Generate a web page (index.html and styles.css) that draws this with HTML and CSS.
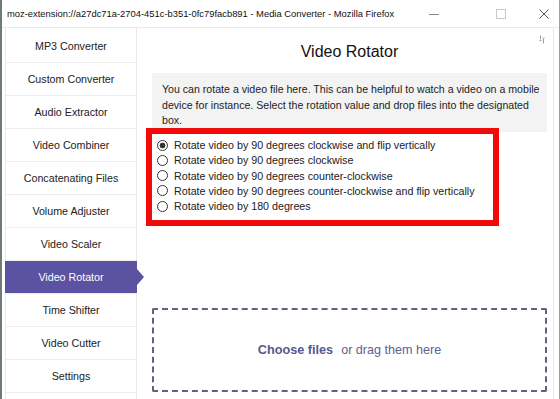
FILE: index.html
```html
<!DOCTYPE html>
<html lang="en">
<head>
  <meta charset="UTF-8">
  <title>Media Converter</title>
  <link rel="stylesheet" href="styles.css">
</head>
<body>
  <div class="window">
    <div class="titlebar">
      <span class="title">moz-extension://a27dc71a-2704-451c-b351-0fc79facb891 - Media Converter - Mozilla Firefox</span>
      <div class="controls">
        <svg class="ctl" width="10" height="10" viewBox="0 0 10 10"><path d="M0 5.5h10" stroke="#8a8a8a" stroke-width="1"/></svg>
        <svg class="ctl" width="10" height="10" viewBox="0 0 10 10"><rect x="0.5" y="0.5" width="9" height="9" fill="none" stroke="#c8c8c8" stroke-width="1"/></svg>
        <svg class="ctl" width="10" height="10" viewBox="0 0 10 10"><path d="M0.5 0.5l9 9M9.5 0.5l-9 9" stroke="#555" stroke-width="1"/></svg>
      </div>
    </div>

    <div class="app">
      <!-- Tool menu -->
      <ul class="menu">
        <li>MP3 Converter</li>
        <li>Custom Converter</li>
        <li>Audio Extractor</li>
        <li>Video Combiner</li>
        <li>Concatenating Files</li>
        <li>Volume Adjuster</li>
        <li>Video Scaler</li>
        <li class="active">Video Rotator</li>
        <li>Time Shifter</li>
        <li>Video Cutter</li>
        <li>Settings</li>
      </ul>

      <div class="content">
        <svg class="corner-icon" width="6" height="9" viewBox="0 0 6 9"><path d="M1.5 0.5v4M4.5 4v4.5M0.5 5.5h2M3.5 3h2" stroke="#9a9a9a" stroke-width="1"/></svg>
        <h1>Video Rotator</h1>
        <p class="info">You can rotate a video file here. This can be helpful to watch a video on a mobile device for instance. Select the rotation value and drop files into the designated box.</p>

        <div class="options">
          <label class="option"><input type="radio" name="rotate" checked> Rotate video by 90 degrees clockwise and flip vertically</label>
          <label class="option"><input type="radio" name="rotate"> Rotate video by 90 degrees clockwise</label>
          <label class="option"><input type="radio" name="rotate"> Rotate video by 90 degrees counter-clockwise</label>
          <label class="option"><input type="radio" name="rotate"> Rotate video by 90 degrees counter-clockwise and flip vertically</label>
          <label class="option"><input type="radio" name="rotate"> Rotate video by 180 degrees</label>
        </div>

        <div class="dropzone">
          <span class="choose">Choose files</span>
          <span class="drag">or drag them here</span>
        </div>
      </div>
    </div>
  </div>
</body>
</html>
```

FILE: styles.css
```css
* {
  box-sizing: border-box;
}
body {
  margin: 0;
  font-family: "Liberation Sans", Arial, sans-serif;
  color: #222;
  background: #fff;
}
.window {
  width: 560px;
  height: 399px;
  overflow: hidden;
  border-left: 2px solid #717a7a;
  border-right: 1px solid #a0a0a0;
}
.titlebar {
  height: 28px;
  display: flex;
  align-items: center;
  padding-left: 5px;
  border-bottom: 1px solid #ebebeb;
}
.title {
  font-size: 9.4px;
  color: #111;
  white-space: nowrap;
}
.controls {
  display: flex;
  flex-shrink: 0;
  margin-left: auto;
  margin-right: 10px;
}
.ctl {
  flex-shrink: 0;
  margin-left: 57px;
}
.ctl:first-child {
  margin-left: 0;
}
.ctl:last-child {
  margin-left: 33px;
}
.app {
  display: flex;
  height: 371px;
  padding-right: 5px;
}
.menu {
  list-style: none;
  margin: 0 0 0 3px;
  padding: 2px 0 0;
  width: 132px;
  border-left: 1px solid #e8e8e8;
  border-right: 1px solid #e8e8e8;
  font-size: 10.7px;
}
.menu li {
  height: 33px;
  display: flex;
  align-items: center;
  justify-content: center;
  border-bottom: 1px solid #ececec;
  position: relative;
  color: #222;
}
.menu li.active {
  background: #5b52a2;
  color: #fff;
  margin-left: -1px;
  margin-right: -1px;
}
.menu li.active::after {
  content: "";
  position: absolute;
  right: -7px;
  top: 8px;
  border-left: 7px solid #5b52a2;
  border-top: 8px solid transparent;
  border-bottom: 8px solid transparent;
}
.content {
  flex: 1;
  position: relative;
  display: flex;
  flex-direction: column;
  padding: 14px 6px 0 15px;
  border-right: 1px solid #e8e8e8;
  font-size: 10.7px;
}
.corner-icon {
  position: absolute;
  top: 7px;
  right: 8px;
}
h1 {
  margin: 0;
  font-size: 16px;
  font-weight: normal;
  line-height: 20px;
  text-align: center;
  color: #111;
}
.info {
  margin: 11px 0 0;
  padding: 9px 2px 3px 10px;
  background: #f3f3f3;
  line-height: 15.5px;
  font-size: 10.6px;
}
.options {
  align-self: flex-start;
  display: flex;
  flex-direction: column;
  margin-top: 2px;
  padding: 4px 18px 6px 5px;
  outline: 6px solid #f00a0a;
}
.option {
  display: flex;
  align-items: center;
  height: 15.25px;
  white-space: nowrap;
}
.option input {
  appearance: none;
  width: 11px;
  height: 11px;
  margin: 0 6px 0 0;
  border: 1px solid #333;
  border-radius: 50%;
  background: #fff;
}
.option input:checked {
  background: radial-gradient(circle, #333 0 2.6px, #fff 3.2px);
}
.dropzone {
  margin-top: 88px;
  height: 84px;
  border: 2px dashed #62627e;
  border-radius: 2px;
  display: flex;
  align-items: center;
  justify-content: center;
  color: #575790;
}
.choose {
  font-weight: bold;
  font-size: 12.7px;
  margin-right: 8px;
}
.drag {
  font-size: 12.6px;
  color: #5f5f8f;
}
```
